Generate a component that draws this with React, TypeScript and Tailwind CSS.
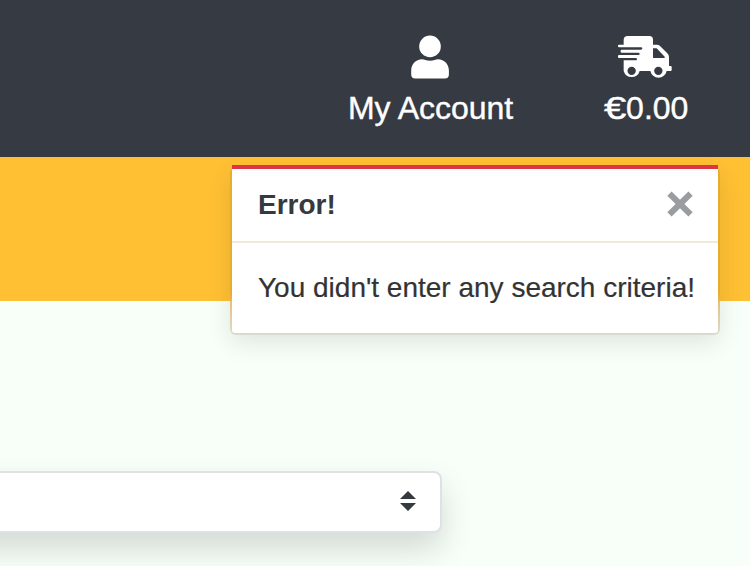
function UserIcon() {
  return (
    <svg width="40" height="46" viewBox="0 0 40 46" fill="#fff" className="mr-0.5 block">
      <circle cx="20" cy="12.4" r="10.8" />
      <path d="M12 25.3C14.4 25.3 16 26.8 20 26.8S25.600 25.300 28 25.300C34.300 25.300 38.900 30.400 38.900 36.500V40.500Q38.900 44.500 34.900 44.500H5.200Q1.200 44.500 1.200 40.500V36.500C1.200 30.400 5.700 25.300 12 25.300Z" />
    </svg>
  );
}

function TruckIcon() {
  return (
    <svg width="56" height="46" viewBox="81 24 168 138" fill="#fff" className="mr-0.5 block">
      <path
        fillRule="evenodd"
        d="M101 56V42Q101 30 113 30H178Q189 30 189 41V56H201Q206 56 210 60L232 82Q237 87 237 93V120H242Q245 120 245 123V132Q245 135 242 135H230A25 25 0 0 1 181 135H149A25 25 0 0 1 101 135V103H137Q141 103 141 99.500Q141 96 137 96H87Q84 96 84 93V90Q84 87 87 87H145Q149 87 149 83.500Q149 80 145 80H95Q92 80 92 77V74Q92 71 95 71H153Q157 71 157 67.500Q157 64 153 64H87Q84 64 84 61V59Q84 56 87 56ZM189 67V96H224V92L200 67ZM125 122A12.500 12.500 0 1 0 125 147A12.500 12.500 0 1 0 125 122ZM205 122A12.500 12.500 0 1 0 205 147A12.500 12.500 0 1 0 205 122Z"
      />
    </svg>
  );
}

export default function App() {
  return (
    <div className="relative flex h-[566px] w-[750px] flex-col overflow-hidden bg-[#f7fff8] font-['Liberation_Sans',Arial,sans-serif]">
      <header className="flex h-[157px] shrink-0 justify-end bg-[#363a42] text-[32px] leading-[48px] text-white">
        <a className="mr-[89px] flex w-[167px] flex-col items-center pt-[34px]">
          <UserIcon />
          <span className="mt-[4px] whitespace-nowrap tracking-[-0.03px] [-webkit-text-stroke:0.4px_white]">My Account</span>
        </a>
        <a className="mr-[61px] flex w-[86px] flex-col items-center pt-[34px]">
          <TruckIcon />
          <span className="mt-[4px] flex [-webkit-text-stroke:0.4px_white]">
            <span className="w-[22.500px] origin-left scale-x-[1.25]">€</span>
            <span>0.00</span>
          </span>
        </a>
      </header>
      <div className="h-36 shrink-0 bg-[#ffc034]" />
      <main className="pt-[170px]">
        <div className="-ml-[58px] flex h-[62px] w-[500px] items-center justify-end rounded-lg border-2 border-[#dee2e6] bg-white pr-6 shadow-[0_16px_32px_rgba(0,0,0,0.15)]">
          <svg width="16" height="20" viewBox="0 0 16 20" fill="#343a40" className="-mt-0.5">
            <path d="M0 8 8 0 16 8ZM0 12H16L8 20Z" />
          </svg>
        </div>
      </main>
      <section role="alert" className="absolute left-[230px] top-[165px] h-[170px] w-[490px] px-0.5 pb-0.5">
        <div className="absolute inset-0 top-0.5 rounded-[6px] bg-gradient-to-b from-[#dfa92d]/80 from-75% to-[#d9dbcd] shadow-[0_8px_24px_rgba(0,0,0,0.1)]" />
        <div className="relative h-full rounded-b-[3px] border-t-4 border-[#dc3545] bg-white">
          <div className="flex h-[74px] items-center justify-between border-b-2 border-[#f3e9d6] pl-[26px] pr-[25px]">
            <strong className="text-[28px] leading-[42px] text-[#343a40]">Error!</strong>
            <svg width="26" height="26" viewBox="0 0 26 26" fill="#999da0" className="-mt-0.5">
              <path d="M4.600 0.400 13 8.700 21.400 0.400 25.700 4.700 17.400 13 25.700 21.300 21.400 25.600 13 17.300 4.600 25.600 0.300 21.300 8.600 13 0.300 4.700Z" />
            </svg>
          </div>
          <p className="whitespace-nowrap pl-[26px] pt-6 text-[28px] leading-[42px] text-[#333] [-webkit-text-stroke:0.2px_#333]">You didn't enter any search criteria!</p>
        </div>
      </section>
    </div>
  );
}
